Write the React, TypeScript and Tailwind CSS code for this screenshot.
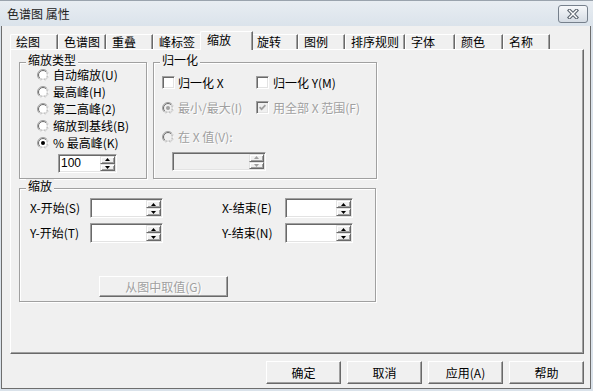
import type { ReactNode } from "react";

type Tab = { label: string; w: string; active?: boolean };

const tabs: Tab[] = [
  { label: "绘图", w: "w-[48px]" },
  { label: "色谱图", w: "w-[48px]" },
  { label: "重叠", w: "w-[47px]" },
  { label: "峰标签", w: "w-[49px]" },
  { label: "缩放", w: "w-[53px]", active: true },
  { label: "旋转", w: "w-[47px]" },
  { label: "图例", w: "w-[47px]" },
  { label: "排序规则", w: "w-[60px]" },
  { label: "字体", w: "w-[50px]" },
  { label: "颜色", w: "w-[48px]" },
  { label: "名称", w: "w-[47px]" },
];

const dim = "text-[#a0a0a0] [text-shadow:1px_1px_0_#fff]";

function Radio({ checked = false, disabled = false }: { checked?: boolean; disabled?: boolean }) {
  return (
    <svg width="12" height="12" viewBox="0 0 12 12" className="shrink-0">
      <circle cx="6" cy="6" r="5.5" fill="none" stroke="#a0a0a0" />
      <path d="M9.89 2.11A5.5 5.5 0 0 1 2.11 9.89" fill="none" stroke="#fff" />
      <circle cx="6" cy="6" r="4.5" fill={disabled ? "#f0f0f0" : "#fff"} stroke="#696969" />
      <path d="M9.18 2.82A4.5 4.5 0 0 1 2.82 9.18" fill="none" stroke="#e3e3e3" />
      {checked && <circle cx="6" cy="6" r="2" fill={disabled ? "#a0a0a0" : "#000"} />}
    </svg>
  );
}

function Check({ checked = false, disabled = false }: { checked?: boolean; disabled?: boolean }) {
  return (
    <span
      className={`flex h-[13px] w-[13px] shrink-0 items-center justify-center border border-t-[#a0a0a0] border-l-[#a0a0a0] border-b-white border-r-white shadow-[inset_1px_1px_0_#696969,inset_-1px_-1px_0_#e3e3e3] ${
        disabled ? "bg-[#f0f0f0]" : "bg-white"
      }`}
    >
      {checked && (
        <svg width="7" height="7" viewBox="0 0 7 7">
          <path d="M0.6 3.2 L2.6 5.2 L6.4 1.2" fill="none" stroke={disabled ? "#a0a0a0" : "#000"} strokeWidth="1.7" />
        </svg>
      )}
    </span>
  );
}

function SpinBtn({ up = false, disabled = false }: { up?: boolean; disabled?: boolean }) {
  return (
    <span className="flex flex-1 items-center justify-center border border-t-[#e3e3e3] border-l-[#e3e3e3] border-b-[#696969] border-r-[#696969] bg-[#f0f0f0] shadow-[inset_1px_1px_0_#fff,inset_-1px_-1px_0_#a0a0a0]">
      <svg width="5" height="3" viewBox="0 0 5 3">
        <path d={up ? "M2.5 0 L5 3 L0 3 Z" : "M0 0 L5 0 L2.5 3 Z"} fill={disabled ? "#a0a0a0" : "#000"} />
      </svg>
    </span>
  );
}

function Spin({ value = "", disabled = false, className = "" }: { value?: string; disabled?: boolean; className?: string }) {
  return (
    <div
      className={`flex border border-t-[#a0a0a0] border-l-[#a0a0a0] border-b-white border-r-white p-[1px] shadow-[inset_1px_1px_0_#696969,inset_-1px_-1px_0_#e3e3e3] ${
        disabled ? "bg-[#f0f0f0]" : "bg-white"
      } ${className}`}
    >
      <span className="flex-1 pl-[1px] font-['Liberation_Sans',sans-serif] text-[12px] leading-[15px] text-black">{value}</span>
      <span className="flex w-[15px] flex-col">
        <SpinBtn up disabled={disabled} />
        <SpinBtn disabled={disabled} />
      </span>
    </div>
  );
}

function Group({ title, className, children }: { title: string; className: string; children: ReactNode }) {
  return (
    <div className={`relative border border-[#a0a0a0] shadow-[1px_1px_0_#fff,inset_1px_1px_0_#fff] ${className}`}>
      <span className="absolute -top-[10px] left-[6px] bg-[#f0f0f0] px-[2px] text-[12px] leading-[14px]">{title}</span>
      {children}
    </div>
  );
}

function Btn({ children, className = "", disabled = false }: { children: ReactNode; className?: string; disabled?: boolean }) {
  return (
    <button
      className={`flex items-center justify-center border border-t-white border-l-white border-b-[#696969] border-r-[#696969] bg-[#f0f0f0] text-[12px] leading-[14px] shadow-[inset_-1px_-1px_0_#a0a0a0] ${
        disabled ? dim : "text-black"
      } ${className}`}
    >
      {children}
    </button>
  );
}

export default function App() {
  return (
    <div className="flex h-[391px] w-[593px] flex-col overflow-hidden bg-[#dae2ea] pr-[2px] pb-[2px] pl-[1px] font-['Noto_Sans_CJK_SC',sans-serif] text-black">
      {/* title bar */}
      <div className="-mr-[2px] -ml-[1px] flex h-[26px] shrink-0 items-start border-t border-[#9aa3ad] bg-gradient-to-b from-[#e8edf2] to-[#dbe3eb] pt-[4px] pr-[5px] pl-[7px]">
        <span className="mt-[2px] flex-1 text-[12px] leading-[14px] text-[#222]">色谱图 属性</span>
        <span className="flex h-[18px] w-[30px] items-center justify-center rounded-[3px] border border-[#76808c] bg-gradient-to-b from-[#f6f8fa] to-[#d5dce4]">
          <svg width="12" height="10" viewBox="0 0 12 10">
            <path d="M2.5 1.5 L9.5 8.5 M9.5 1.5 L2.5 8.5" stroke="#5d6670" strokeWidth="3.6" strokeLinecap="square" />
            <path d="M2.5 1.5 L9.5 8.5 M9.5 1.5 L2.5 8.5" stroke="#fff" strokeWidth="1.4" strokeLinecap="square" />
          </svg>
        </span>
      </div>

      {/* client area */}
      <div className="flex flex-1 flex-col border-x border-b border-[#6e6e6e] bg-[#f0f0f0] pt-[5px] pr-[6px] pb-[4px] pl-[8px]">
        {/* tabs */}
        <div className="flex items-end">
          {tabs.map((t) =>
            t.active ? (
              <div
                key={t.label}
                className={`relative z-10 -mx-[2px] -mb-px flex h-[19px] items-center rounded-tl-[2px] border-t border-l border-white border-r border-r-[#696969] bg-[#f0f0f0] pb-[2px] pl-[6px] text-[12px] leading-[14px] shadow-[inset_-1px_0_0_#a0a0a0] ${t.w}`}
              >
                {t.label}
              </div>
            ) : (
              <div
                key={t.label}
                className={`flex h-[15px] items-center rounded-tl-[2px] border-t border-l border-white border-r border-r-[#696969] pl-[5px] text-[12px] leading-[14px] shadow-[inset_-1px_0_0_#a0a0a0] ${t.w}`}
              >
                {t.label}
              </div>
            )
          )}
        </div>

        {/* tab panel */}
        <div className="h-[305px] border-t border-l border-white border-r border-b border-r-[#696969] border-b-[#696969] pt-[12px] pl-[8px] shadow-[inset_-1px_-1px_0_#a0a0a0]">
          <div className="flex items-start gap-[6px]">
            <Group title="缩放类型" className="h-[117px] w-[128px]">
              <div className="flex flex-col pt-[3px] pl-[17px] text-[12px] leading-[14px]">
                {["自动缩放(U)", "最高峰(H)", "第二高峰(2)", "缩放到基线(B)"].map((s) => (
                  <label key={s} className="flex h-[17px] items-center gap-[4px]">
                    <Radio />
                    <span>{s}</span>
                  </label>
                ))}
                <label className="flex h-[17px] items-center gap-[4px]">
                  <Radio checked />
                  <span>% 最高峰(K)</span>
                </label>
                <Spin value="100" className="mt-[3px] ml-[21px] h-[19px] w-[59px]" />
              </div>
            </Group>

            <Group title="归一化" className="h-[117px] w-[224px]">
              <div className="flex flex-col pt-[11px] pl-[8px] text-[12px] leading-[14px]">
                <div className="flex h-[17px] items-center">
                  <label className="flex w-[94px] items-center gap-[3px]">
                    <Check />
                    <span>归一化 X</span>
                  </label>
                  <label className="flex items-center gap-[4px]">
                    <Check />
                    <span>归一化 Y(M)</span>
                  </label>
                </div>
                <div className="mt-[8px] flex h-[17px] items-center">
                  <label className="flex w-[94px] items-center gap-[4px]">
                    <Radio checked disabled />
                    <span className={dim}>最小/最大(I)</span>
                  </label>
                  <label className="flex items-center gap-[4px]">
                    <Check checked disabled />
                    <span className={dim}>用全部 X 范围(F)</span>
                  </label>
                </div>
                <label className="mt-[12px] flex h-[17px] items-center gap-[4px]">
                  <Radio disabled />
                  <span className={dim}>在 X 值(V):</span>
                </label>
                <Spin disabled className="mt-[7px] ml-[10px] h-[19px] w-[94px]" />
              </div>
            </Group>
          </div>

          <Group title="缩放" className="mt-[9px] h-[114px] w-[357px]">
            <div className="flex flex-col pt-[9px] pl-[10px] text-[12px] leading-[14px]">
              <div className="flex h-[20px] items-center">
                <span className="w-[60px]">X-开始(S)</span>
                <Spin className="h-[20px] w-[73px]" />
                <span className="ml-[59px] w-[63px]">X-结束(E)</span>
                <Spin className="h-[20px] w-[68px]" />
              </div>
              <div className="mt-[5px] flex h-[20px] items-center">
                <span className="w-[60px]">Y-开始(T)</span>
                <Spin className="h-[20px] w-[73px]" />
                <span className="ml-[59px] w-[63px]">Y-结束(N)</span>
                <Spin className="h-[20px] w-[68px]" />
              </div>
              <Btn disabled className="mt-[33px] ml-[69px] h-[21px] w-[129px]">
                从图中取值(G)
              </Btn>
            </div>
          </Group>
        </div>

        {/* dialog buttons */}
        <div className="mt-[7px] flex justify-end gap-[6px]">
          <Btn className="h-[23px] w-[75px]">确定</Btn>
          <Btn className="h-[23px] w-[75px]">取消</Btn>
          <Btn className="h-[23px] w-[75px]">应用(A)</Btn>
          <Btn className="h-[23px] w-[75px]">帮助</Btn>
        </div>
      </div>
    </div>
  );
}
